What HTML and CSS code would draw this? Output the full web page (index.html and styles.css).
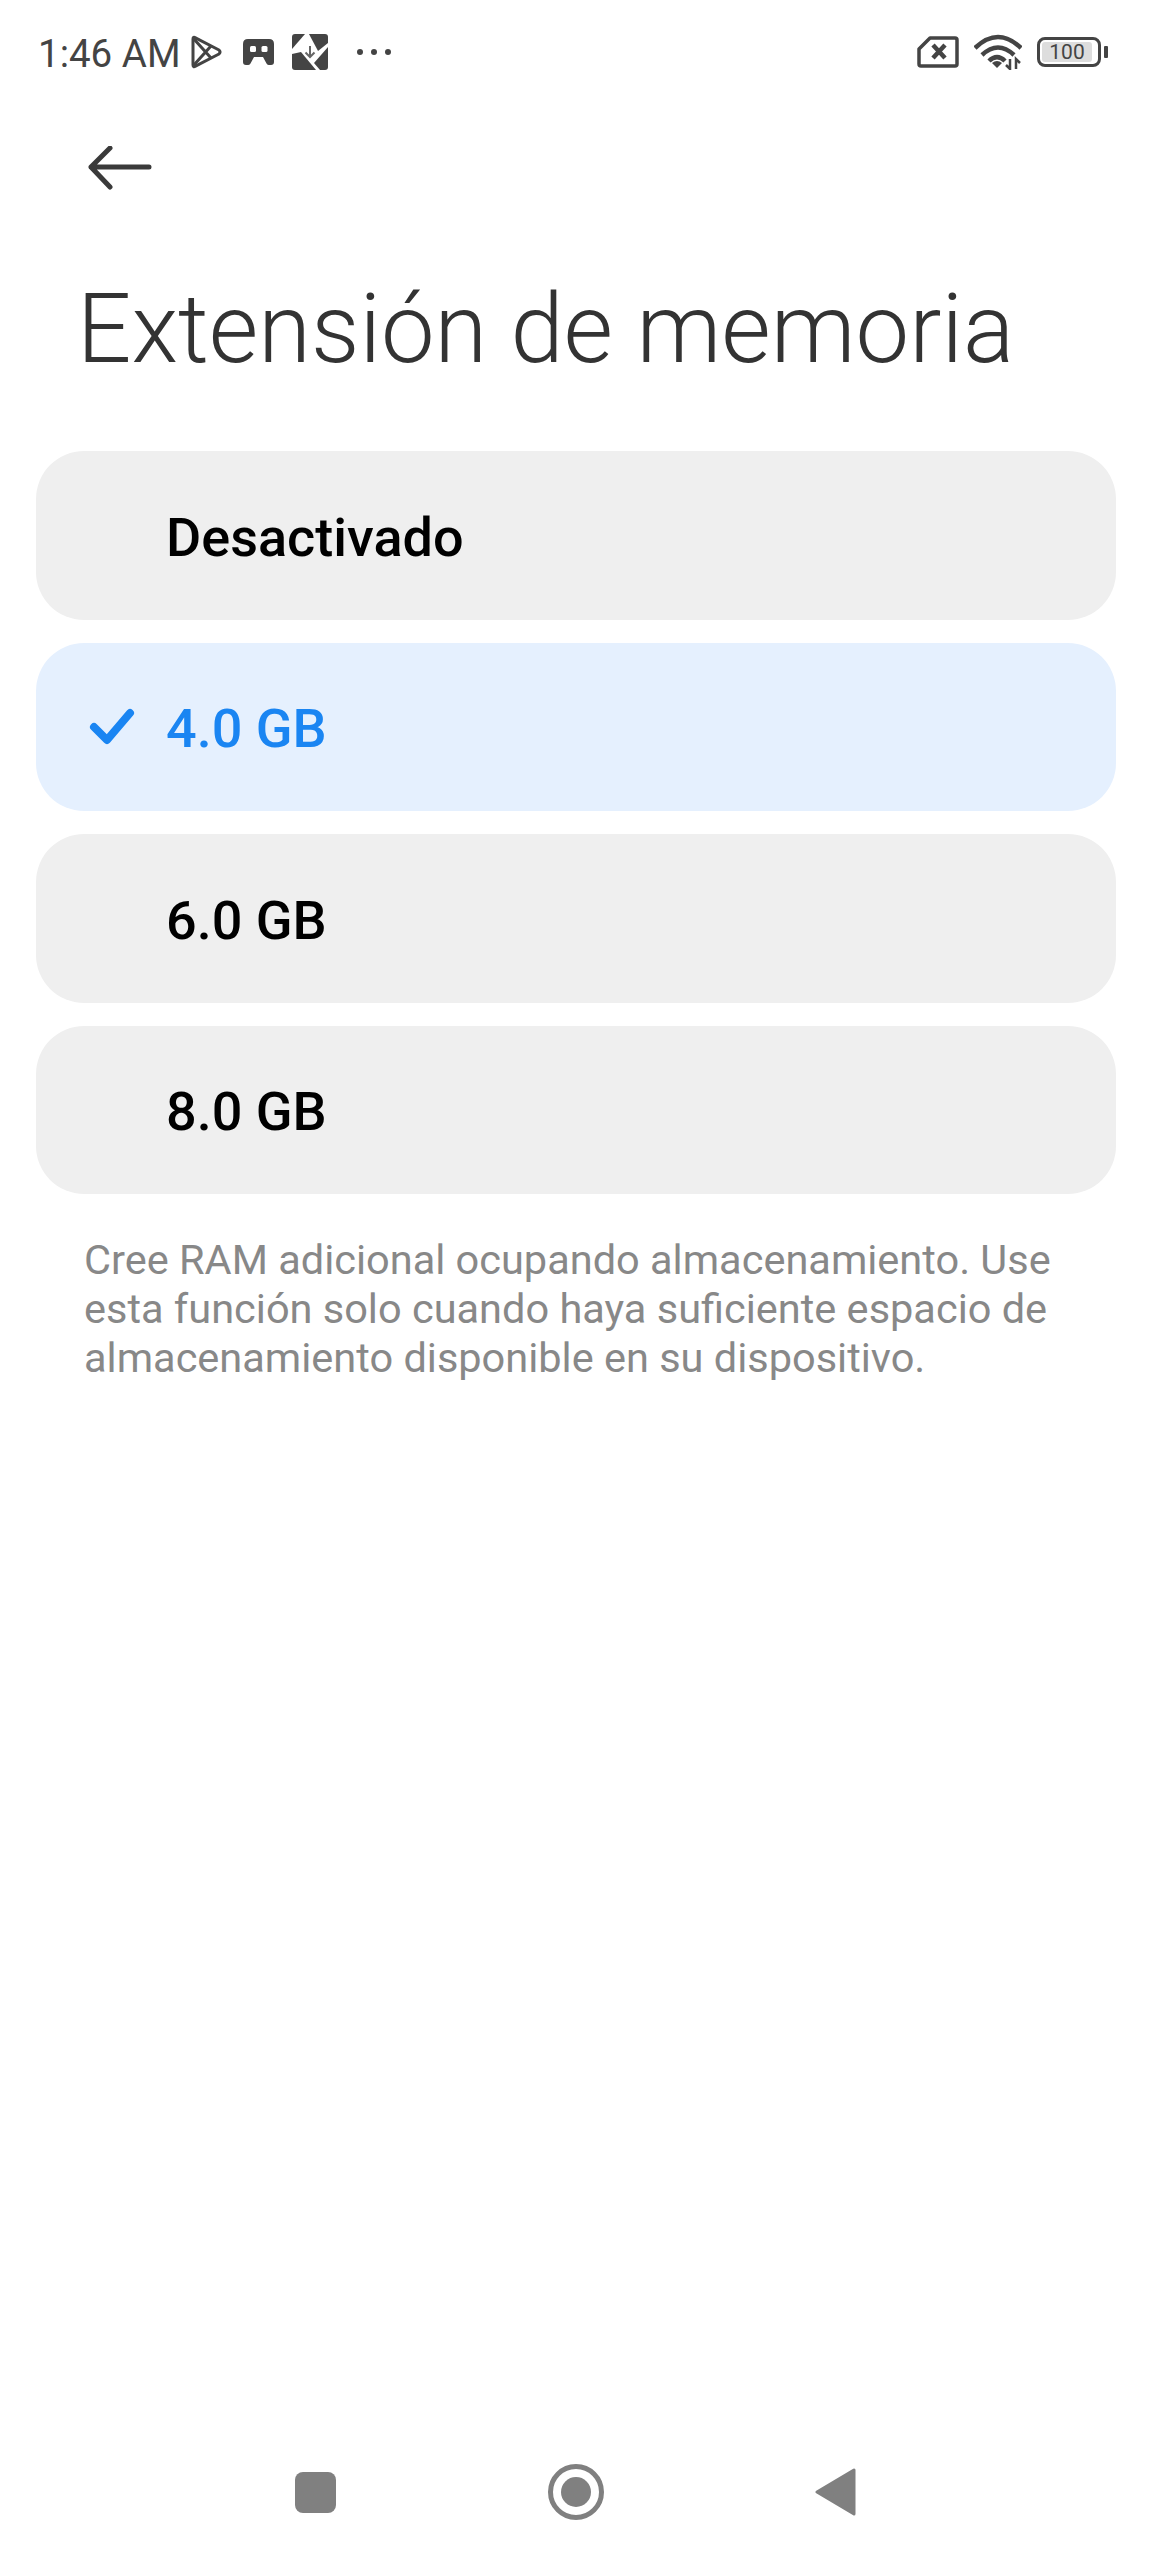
FILE: index.html
```html
<!DOCTYPE html>
<html lang="es">
<head>
  <meta charset="UTF-8" />
  <meta name="viewport" content="width=device-width, initial-scale=1.0"/>
  <title>Extensión de memoria</title>
  <link rel="stylesheet" href="styles.css">
</head>
<body>

  <!-- Barra de estado -->
  <div class="status-bar">
    <div class="status-left">
      <span class="hora">1:46 AM</span>
      <svg class="icono-play" width="32" height="34" viewBox="0 0 32 34" fill="none" stroke="#444" stroke-width="3" stroke-linejoin="round">
        <path d="M3 4Q3 1.500 5.500 2.800L29 15Q31 17 29 19L5.500 31.200Q3 32.500 3 30Z"/>
        <path d="M3 3L21 23M3 31L21 11"/>
      </svg>
      <svg class="icono-mando" width="31" height="26" viewBox="0 0 31 26">
        <path fill="#444" d="M5 0H26Q31 0 31 5V23Q31 26 28 26H26Q24.500 26 23.500 24.500L20 18H11L7.500 24.500Q6.500 26 5 26H3Q0 26 0 23V5Q0 0 5 0Z"/>
        <rect x="7" y="7" width="6" height="6" rx="1.500" fill="#fff"/>
        <rect x="18.500" y="7" width="6" height="6" rx="1.500" fill="#fff"/>
      </svg>
      <svg class="icono-descarga" width="36" height="36" viewBox="0 0 36 36">
        <path fill="#444" d="M0 3Q0 0 3 0H13L0 15Z"/>
        <path fill="#444" d="M17 0H33Q36 0 36 3V9L26 17Z"/>
        <path fill="#444" d="M0 20L9 18L24 36H3Q0 36 0 33Z"/>
        <path fill="#444" d="M36 13V33Q36 36 33 36H28L22 29Z"/>
        <path d="M18 12V23M13.500 18.500L18 23L22.500 18.500" stroke="#666" stroke-width="2" fill="none"/>
      </svg>
      <div class="puntos"><i></i><i></i><i></i></div>
    </div>
    <div class="status-right">
      <svg class="icono-sim" width="42" height="32" viewBox="0 0 42 32" fill="none">
        <path d="M13 2H38Q40 2 40 4V28Q40 30 38 30H4Q2 30 2 28V13Z" stroke="#444" stroke-width="3.500" stroke-linejoin="round"/>
        <path d="M16 9L28 22M28 9L16 22" stroke="#444" stroke-width="4.500"/>
      </svg>
      <svg class="icono-wifi" width="48" height="36" viewBox="0 0 48 36" fill="none" stroke="#444" stroke-width="4.500">
        <path d="M1 14Q24 -8 47 14"/>
        <path d="M8 21Q24 6 40 21"/>
        <path d="M15 27Q23 19 31 27"/>
        <path d="M18 29L23 34L28 29Q23 25 18 29Z" fill="#444" stroke="none"/>
        <path d="M36 25V35L32 31M42 35V25L46 29" stroke-width="2.500"/>
      </svg>
      <div class="bateria">
        <div class="bateria-cuerpo"><span>100</span></div>
        <div class="bateria-punta"></div>
      </div>
    </div>
  </div>

  <!-- Cabecera -->
  <div class="cabecera">
    <svg class="flecha" width="64" height="44" viewBox="0 0 64 44" fill="none" stroke="#3a3a3a" stroke-width="5" stroke-linecap="round" stroke-linejoin="round">
      <path d="M61 21H3M22 2L3 21L22 41"/>
    </svg>
    <h1 class="titulo">Extensión de memoria</h1>
  </div>

  <!-- Opciones -->
  <div class="lista-opciones">
    <div class="opcion">
      <span class="opcion-check"></span>
      <span>Desactivado</span>
    </div>
    <div class="opcion opcion-activa">
      <span class="opcion-check">
        <svg width="46" height="38" viewBox="0 0 46 38" fill="none" stroke="#1a85f2" stroke-width="8" stroke-linecap="round" stroke-linejoin="round">
          <path d="M5 19L18 32L41 5"/>
        </svg>
      </span>
      <span>4.0 GB</span>
    </div>
    <div class="opcion">
      <span class="opcion-check"></span>
      <span>6.0 GB</span>
    </div>
    <div class="opcion">
      <span class="opcion-check"></span>
      <span>8.0 GB</span>
    </div>
  </div>

  <p class="descripcion">Cree RAM adicional ocupando almacenamiento. Use<br>esta función solo cuando haya suficiente espacio de<br>almacenamiento disponible en su dispositivo.</p>

  <!-- Navegación -->
  <div class="nav-bar">
    <div class="nav-cuadrado"></div>
    <div class="nav-circulo"><div class="nav-punto"></div></div>
    <svg class="nav-atras" width="42" height="48" viewBox="0 0 42 48">
      <path fill="#808080" stroke="#808080" stroke-width="3" stroke-linejoin="round" d="M39 2V46L2 24Z"/>
    </svg>
  </div>

</body>
</html>
```

FILE: styles.css
```css
* { margin: 0; padding: 0; box-sizing: border-box; }

body {
  font-family: Roboto, sans-serif;
  background: #fff;
  color: #000;
  width: 1152px;
  height: 2560px;
  display: flex;
  flex-direction: column;
  overflow: hidden;
}

.status-bar {
  display: flex;
  justify-content: space-between;
  align-items: center;
  height: 52px;
  margin-top: 26px;
  padding: 0 44px 0 38px;
  color: #444;
}

.status-left, .status-right {
  display: flex;
  align-items: center;
}

.hora {
  font-size: 38.5px;
  width: 152px;
  padding-top: 2px;
}

.icono-mando { margin-left: 21px; }
.icono-descarga { margin-left: 18px; }

.puntos {
  display: flex;
  gap: 8px;
  margin-left: 29px;
}

.puntos i {
  width: 6px;
  height: 6px;
  border-radius: 50%;
  background: #444;
}

.icono-wifi { margin-left: 15px; }

.bateria {
  display: flex;
  align-items: center;
  margin-left: 15px;
}

.bateria-cuerpo {
  width: 64px;
  height: 30px;
  border: 3px solid #444;
  border-radius: 8px;
  padding: 2px;
  font-size: 21px;
  line-height: 20px;
  text-align: center;
}

.bateria-cuerpo span {
  display: block;
  height: 20px;
  width: 50px;
  background: #ddd;
  border-radius: 3px;
}

.bateria-punta {
  width: 4px;
  height: 12px;
  background: #444;
  margin-left: 3px;
  border-radius: 1px;
}

.cabecera {
  padding: 68px 0 0 88px;
}

.flecha {
  display: block;
}

.titulo {
  font-size: 95.7px;
  font-weight: 300;
  color: #333;
  line-height: 108px;
  margin: 85px 0 0 -11px;
}

.lista-opciones {
  display: flex;
  flex-direction: column;
  gap: 23px;
  margin: 68px 36px 0;
}

.opcion {
  display: flex;
  align-items: center;
  height: 168.5px;
  padding: 4px 0 0 130px;
  position: relative;
  background: #efefef;
  border-radius: 48px;
  font-size: 54px;
  font-weight: 500;
  color: #000;
}

.opcion-check {
  position: absolute;
  left: 53px;
  top: 65px;
  line-height: 0;
}

.opcion-activa {
  background: #e5f0fe;
  color: #1a85f2;
}

.descripcion {
  font-size: 41.5px;
  line-height: 49px;
  font-weight: 400;
  color: #888;
  margin: 41px 0 0 84px;
}

.nav-bar {
  margin-top: auto;
  margin-bottom: 40px;
  height: 56px;
  display: flex;
  align-items: center;
  padding-left: 295px;
}

.nav-cuadrado {
  width: 41px;
  height: 41px;
  background: #808080;
  border-radius: 8px;
}

.nav-circulo {
  width: 56px;
  height: 56px;
  border: 5px solid #808080;
  border-radius: 50%;
  margin-left: 212px;
  display: flex;
  align-items: center;
  justify-content: center;
}

.nav-punto {
  width: 30px;
  height: 30px;
  background: #808080;
  border-radius: 50%;
}

.nav-atras { margin-left: 211px; }
```
